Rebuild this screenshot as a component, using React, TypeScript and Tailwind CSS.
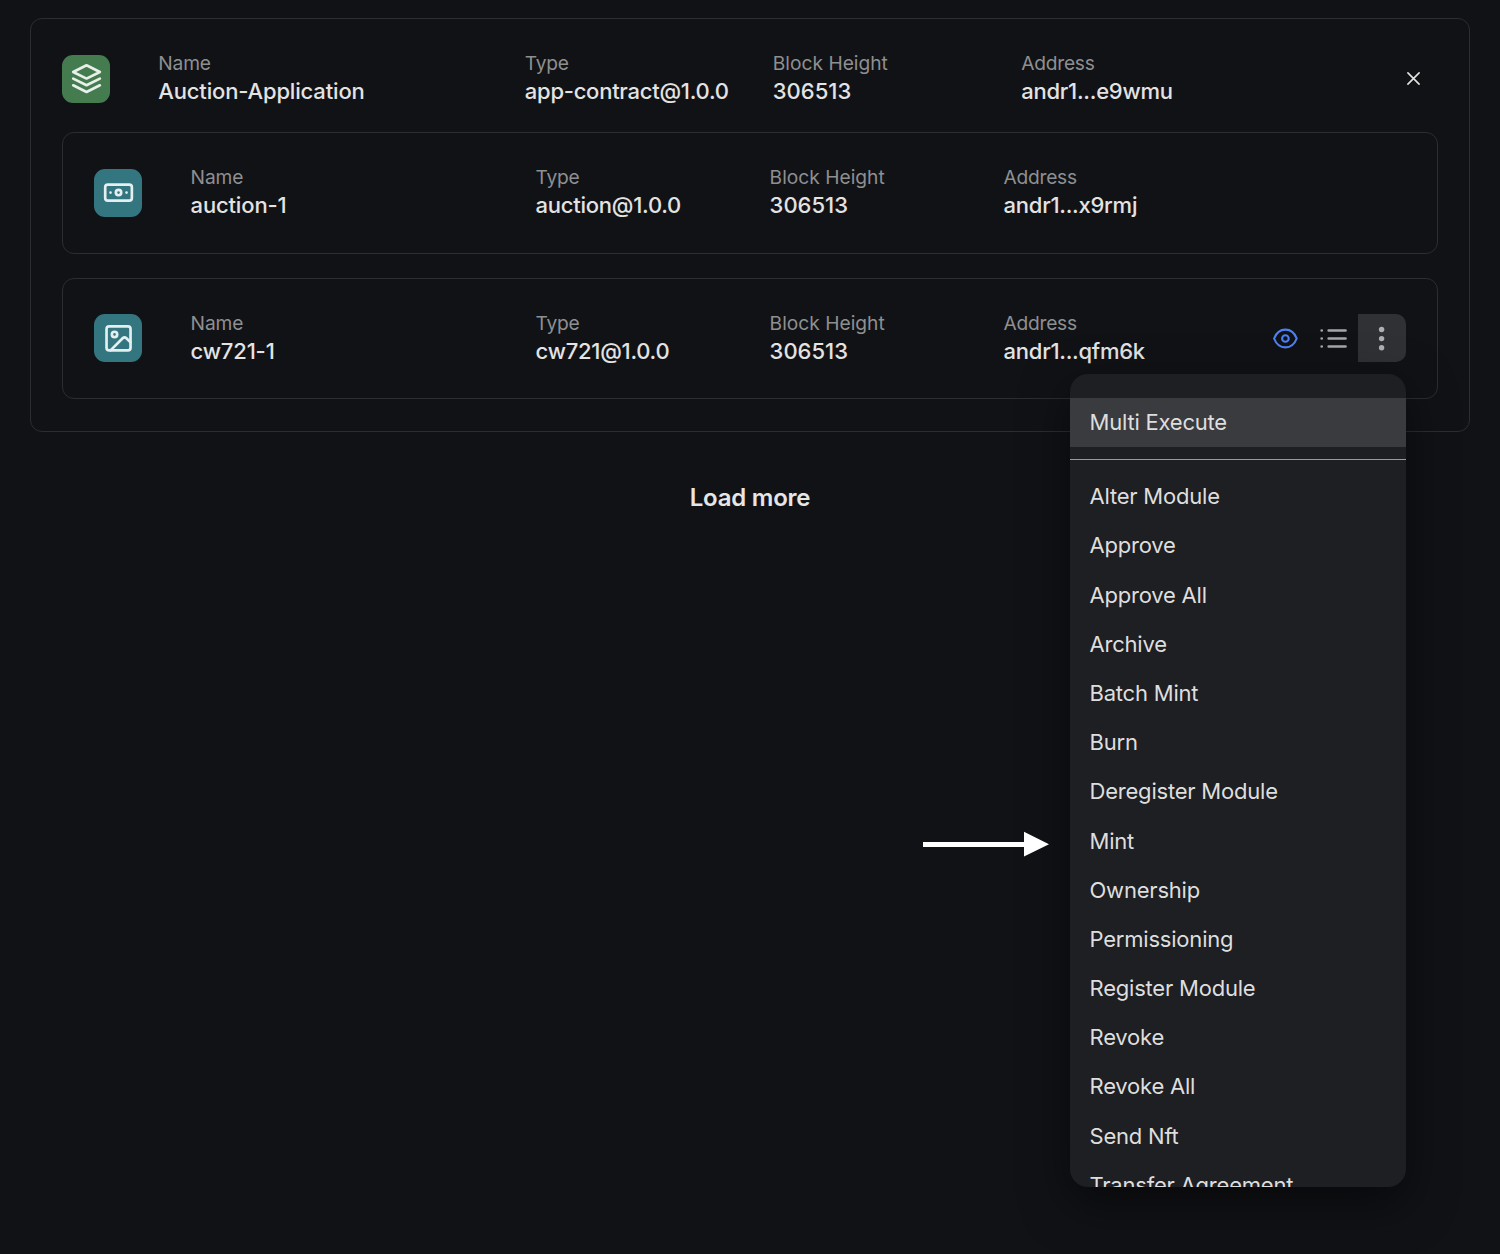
import React from "react";

type Entry = { name: string; type: string; height: string; address: string };

const menuItems = [
  "Alter Module",
  "Approve",
  "Approve All",
  "Archive",
  "Batch Mint",
  "Burn",
  "Deregister Module",
  "Mint",
  "Ownership",
  "Permissioning",
  "Register Module",
  "Revoke",
  "Revoke All",
  "Send Nft",
  "Transfer Agreement",
];

function Icon({ children, viewBox = "-0.4 0.3 24 24" }: { children: React.ReactNode; viewBox?: string }) {
  return (
    <svg
      viewBox={viewBox}
      fill="none"
      stroke="currentColor"
      strokeWidth="2"
      strokeLinecap="round"
      strokeLinejoin="round"
      className="size-8"
    >
      {children}
    </svg>
  );
}

function Field({ label, value, className }: { label: string; value: string; className: string }) {
  return (
    <div className={`flex shrink-0 flex-col whitespace-nowrap ${className}`}>
      <span className="text-[19.2px] leading-7 text-[#8e8f90]">{label}</span>
      <span className="text-[22px] leading-7 font-medium text-[#e3e3e3]">{value}</span>
    </div>
  );
}

function Fields({ entry, first, second, rest }: { entry: Entry; first: string; second: string; rest: string }) {
  return (
    <>
      <Field label="Name" value={entry.name} className={`tracking-[-0.16px] ${first}`} />
      <Field label="Type" value={entry.type} className={`tracking-[-0.25px] ${second}`} />
      <Field label="Block Height" value={entry.height} className={rest} />
      <Field label="Address" value={entry.address} className={`tracking-[-0.26px] ${rest}`} />
    </>
  );
}

function ComponentCard({ entry, icon, actions }: { entry: Entry; icon: React.ReactNode; actions?: React.ReactNode }) {
  return (
    <div className="flex h-[121.5px] items-center rounded-xl border border-[#2c2d30] px-[31px]">
      <div className="mr-[48.6px] flex size-12 shrink-0 items-center justify-center rounded-[11px] bg-[#347680] text-[#e6eff0]">
        {icon}
      </div>
      <Fields entry={entry} first="w-[345px] pb-[3px]" second="w-[234px] pb-[3px]" rest="w-[234px] pb-[3px]" />
      {actions}
    </div>
  );
}

function ActionMenu() {
  return (
    <div className="absolute top-[60px] right-0 z-10 h-[813px] w-[336px] overflow-hidden rounded-[18px] bg-[#1e1f23] pt-6 text-[22px] tracking-[-0.21px] text-[#dedede] shadow-[0_16px_48px_rgba(0,0,0,0.5)]">
      <div className="flex h-[49px] items-center bg-[#3a3b3e] px-[19.5px]">Multi Execute</div>
      <div className="mt-3 mb-[11.89px] h-px bg-[#98999b]" />
      {menuItems.map((item) => (
        <div key={item} className="flex h-[49.2px] items-center px-[19.5px] whitespace-nowrap">
          {item}
        </div>
      ))}
    </div>
  );
}

function Actions() {
  return (
    <div className="relative ml-auto flex items-center">
      <div className="flex size-12 items-center justify-center text-[#4e80f5]">
        <svg viewBox="0.6 0 28 28" fill="none" stroke="currentColor" strokeWidth="2.1" className="size-7">
          <path
            d="M2.7 14.5C4.8 9 9 5.6 14 5.6S23.2 9 25.3 14.5C23.2 20 19 23.400 14 23.400S4.800 20 2.700 14.500Z"
            strokeLinejoin="round"
          />
          <circle cx="14" cy="14.500" r="3.300" />
        </svg>
      </div>
      <div className="flex size-12 items-center justify-center text-[#a5a6a7]">
        <svg viewBox="0 0 48 48" fill="none" stroke="currentColor" strokeWidth="2.700" strokeLinecap="round" className="size-12">
          <path d="M18.700 16.500H35.500M18.700 24.500H35.500M18.700 32.500H35.500" />
          <path d="M11.700 16.500h.01M11.700 24.500h.01M11.700 32.500h.01" />
        </svg>
      </div>
      <div className="flex size-12 items-center justify-center rounded-r-[10px] bg-[#303134] text-[#aeafb0]">
        <svg viewBox="0 0 48 48" fill="currentColor" className="size-12">
          <circle cx="23.600" cy="15.500" r="2.700" />
          <circle cx="23.600" cy="24.600" r="2.700" />
          <circle cx="23.600" cy="33.700" r="2.700" />
        </svg>
      </div>
      <ActionMenu />
    </div>
  );
}

export default function App() {
  return (
    <main className="relative h-[1254px] w-[1500px] overflow-hidden bg-[#111216] px-[30px] pt-[18px] font-['Inter',sans-serif]">
      <section className="h-[414px] rounded-xl border border-[#2c2d30] px-[31px] pt-8">
        <div className="flex h-14 items-center">
          <div className="mr-[48.3px] flex size-12 shrink-0 items-center justify-center rounded-[11px] bg-[#447c50] text-[#e8f0e9]">
            <Icon>
              <path d="M2 12 11.640 16.820Q12 17 12.360 16.820L22 12M2 17 11.640 21.820Q12 22 12.360 21.820L22 17M2 7 11.640 2.180Q12 2 12.360 2.180L22 7 12.360 11.820Q12 12 11.640 11.820Z" />
            </Icon>
          </div>
          <Fields
            entry={{ name: "Auction-Application", type: "app-contract@1.0.0", height: "306513", address: "andr1...e9wmu" }}
            first="w-[366.5px] pb-1"
            second="w-[248px] pb-1"
            rest="w-[248.5px] pb-1"
          />
          <svg
            viewBox="0.3 0.3 16 16"
            fill="none"
            stroke="#e3e3e3"
            strokeWidth="1.600"
            strokeLinecap="round"
            className="mr-4 ml-auto size-4"
          >
            <path d="m2.200 2.200 11.200 11.200M13.400 2.200 2.200 13.400" />
          </svg>
        </div>
        <div className="mt-[25px] flex flex-col gap-6">
          <ComponentCard
            entry={{ name: "auction-1", type: "auction@1.0.0", height: "306513", address: "andr1...x9rmj" }}
            icon={
              <Icon>
                <rect x="2" y="6" width="20" height="12" rx="2" />
                <circle cx="12" cy="12" r="2" />
                <path d="M6 12h.01M18 12h.01" />
              </Icon>
            }
          />
          <ComponentCard
            entry={{ name: "cw721-1", type: "cw721@1.0.0", height: "306513", address: "andr1...qfm6k" }}
            icon={
              <Icon viewBox="-0.4 -0.3 24 24">
                <rect x="3" y="3" width="18" height="18" rx="2" />
                <circle cx="9" cy="9" r="2" />
                <path d="m21 15-3.086-3.086a2 2 0 0 0-2.828 0L6 21" />
              </Icon>
            }
            actions={<Actions />}
          />
        </div>
      </section>
      <div className="mt-[50px] flex h-8 items-center justify-center text-[24px] font-semibold tracking-[-0.25px] text-[#e6e6e6]">
        Load more
      </div>
      <svg viewBox="0 0 126 26" className="absolute top-[831px] left-[923px] z-20 h-[26px] w-[126px]" fill="#fff">
        <path d="M0 11H101V.8L126 13.200 101 25.600V16H0Z" />
      </svg>
    </main>
  );
}
